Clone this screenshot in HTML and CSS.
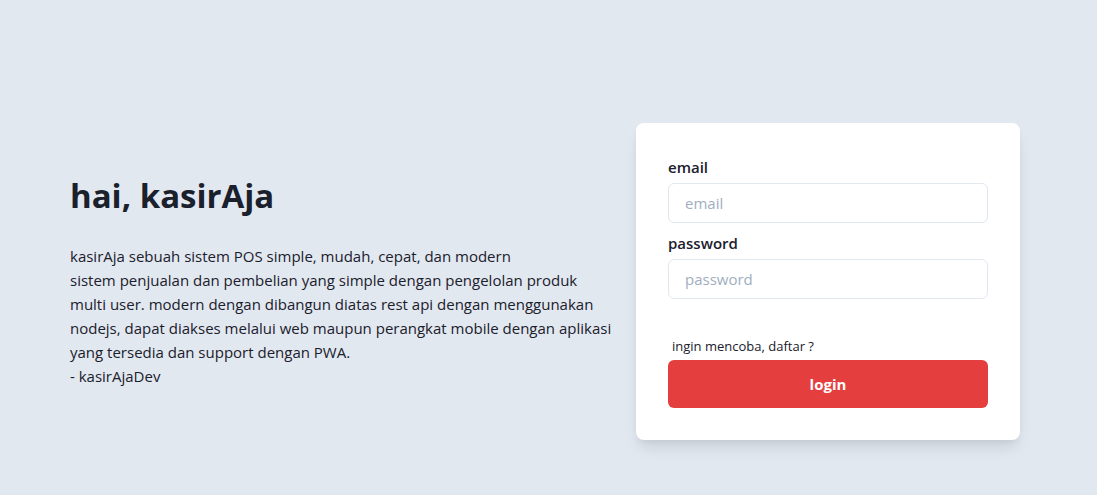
FILE: index.html
```html
<!DOCTYPE html>
<html lang="id">
<head>
<meta charset="utf-8">
<title>kasirAja - login</title>
<link rel="stylesheet" href="styles.css">
</head>
<body>
<main class="page">
  <section class="intro">
    <h1 class="title">hai, kasirAja</h1>
    <p class="desc">kasirAja sebuah sistem POS simple, mudah, cepat, dan modern<br>sistem penjualan dan pembelian yang simple dengan pengelolan produk<br>multi user. modern dengan dibangun diatas rest api dengan menggunakan<br>nodejs, dapat diakses melalui web maupun perangkat mobile dengan aplikasi<br>yang tersedia dan support dengan PWA.<br>- kasirAjaDev</p>
  </section>
  <form class="card">
    <label class="label" for="email">email</label>
    <input class="input" id="email" type="text" placeholder="email">
    <label class="label label-gap" for="password">password</label>
    <input class="input" id="password" type="password" placeholder="password">
    <a class="register">ingin mencoba, daftar ?</a>
    <button class="btn" type="button">login</button>
  </form>
</main>
</body>
</html>
```
FILE: styles.css
```css
* { box-sizing: border-box; }
html, body { margin: 0; height: 100%; }
body {
  background: #e2e8f0;
  font-family: "Open Sans", "Noto Sans", sans-serif;
  color: #1a202c;
}
.page {
  display: flex;
  justify-content: space-between;
  align-items: flex-start;
  padding: 123px 77px 0 70px;
}
.intro { margin-top: 53px; }
.title {
  margin: 0 0 28px;
  font-size: 33px;
  line-height: 40px;
  font-weight: 700;
}
.desc {
  margin: 0;
  font-size: 15px;
  line-height: 24px;
  color: #1a202c;
}
.card {
  width: 384px;
  background: #fff;
  border-radius: 8px;
  padding: 32px;
  display: flex;
  flex-direction: column;
  box-shadow: 0 10px 15px -3px rgba(0,0,0,0.1), 0 4px 6px -2px rgba(0,0,0,0.05);
}
.label {
  font-size: 15px;
  font-weight: 600;
  line-height: 24px;
  margin-bottom: 4px;
}
.label-gap { margin-top: 8px; }
.input {
  height: 40px;
  border: 1px solid #e2e8f0;
  border-radius: 6px;
  padding: 0 16px;
  font-family: inherit;
  font-size: 15px;
  color: #1a202c;
  outline: none;
}
.input::placeholder { color: #a0aec0; }
.register {
  margin-top: 37px;
  padding-left: 4px;
  font-size: 13px;
  line-height: 20px;
  color: #1a202c;
}
.btn {
  margin-top: 4px;
  height: 48px;
  border: 0;
  border-radius: 6px;
  background: #e53e3e;
  color: #fff;
  font-family: inherit;
  font-size: 15px;
  font-weight: 700;
}
```
